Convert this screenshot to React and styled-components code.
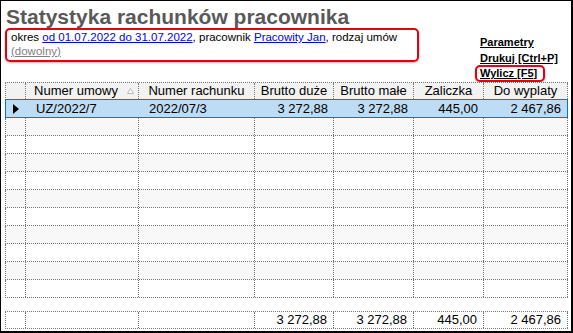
import React from "react";
import styled, { createGlobalStyle } from "styled-components";

const Global = createGlobalStyle`
  html, body { margin: 0; padding: 0; background: #fff; }
  * { box-sizing: border-box; }
`;

const Frame = styled.div`
  width: 573px;
  height: 333px;
  border-style: solid;
  border-color: #000;
  border-width: 1px 2px 2px 1px;
  background: #fff;
  font-family: "Liberation Sans", Arial, sans-serif;
  color: #000;
  overflow: hidden;
`;

const Header = styled.div`
  display: grid;
  grid-template-columns: 470px 1fr;
  height: 81px;
  padding-left: 4px;
`;

const LeftCol = styled.div`
  display: flex;
  flex-direction: column;
  align-items: flex-start;
`;

const Title = styled.h1`
  margin: 5px 0 0 1px;
  font-size: 21px;
  line-height: 22px;
  font-weight: bold;
  color: #595959;
  white-space: nowrap;
`;

const Annotated = styled.div`
  border: 2px solid #e3000f;
  border-radius: 5px;
  box-shadow: 0 1px 2px rgba(200, 0, 0, 0.35);
`;

const Filters = styled(Annotated)`
  width: 414px;
  padding: 0 4px 2px 4px;
  font-size: 11.5px;
  line-height: 14px;
`;

const Link = styled.a`
  color: ${(p) => (p.$muted ? "#808080" : "#0000ff")};
  text-decoration: underline;
  cursor: pointer;
`;

const Actions = styled.div`
  display: flex;
  flex-direction: column;
  align-items: flex-start;
  padding-top: 33px;
`;

const Action = styled.a`
  font-size: 11px;
  line-height: 16px;
  font-weight: bold;
  color: #000;
  text-decoration: underline;
  padding-left: 5px;
  white-space: nowrap;
  cursor: pointer;
`;

const ActionBox = styled(Annotated)`
  margin-top: -1px;
  padding: 0 6px 0 3px;
  ${Action} { padding-left: 0; line-height: 13px; display: block; }
`;

const COLS = "20px 113px 116px 79px 80px 70px 84px";
const COLS_SEL = "20px 113px 116px 79px 80px 70px 83px";

const Grid = styled.div`
  display: flex;
  flex-direction: column;
  margin-left: 4px;
  width: 563px;
  font-size: 13px;
`;

const Row = styled.div`
  display: grid;
  grid-template-columns: ${COLS};
  height: 18px;
  border-left: 1px dotted #777;
  border-bottom: 1px dotted #777;
  background: ${(p) => (p.$shade ? "#f8f8f8" : "#fff")};
  line-height: 17px;
`;

const HeadRow = styled(Row)`
  border-top: 1px dotted #777;
  background: #f2f2f2;
  line-height: 16px;
`;

const SelectedRow = styled.div`
  display: grid;
  grid-template-columns: ${COLS_SEL};
  height: 19px;
  margin-top: -1px;
  border: 1px solid #0078d7;
  background: #bedcf4;
  line-height: 17px;
`;

const FootRow = styled(Row)`
  margin-top: 13px;
  border-top: 1px dotted #777;
  line-height: 16px;
`;

const Cell = styled.div`
  border-right: ${(p) => (p.$plain ? "none" : "1px dotted #777")};
  padding: ${(p) => (p.$num ? "0 6px 0 0" : "0 0 0 10px")};
  text-align: ${(p) => (p.$num ? "right" : "left")};
  white-space: nowrap;
  overflow: hidden;
`;

const IndicatorCell = styled(Cell)`
  padding: 0;
  display: flex;
  align-items: center;
  justify-content: center;
`;

const HeadCell = styled.div`
  border-right: 1px dotted #777;
  display: flex;
  align-items: center;
  white-space: nowrap;
  overflow: hidden;
`;

const HeadLabel = styled.span`
  flex: 1;
  text-align: center;
`;

const SortMark = styled.span`
  width: 12px;
  display: flex;
  align-items: center;
  padding-left: 1px;
`;

const columns = ["Numer umowy", "Numer rachunku", "Brutto duże", "Brutto małe", "Zaliczka", "Do wyplaty"];

const emptyRows = Array.from({ length: 10 }, (_, i) => i);

export default function App() {
  return (
    <>
      <Global />
      <Frame>
        <Header>
          <LeftCol>
            <Title>Statystyka rachunków pracownika</Title>
            <Filters>
              okres <Link>od 01.07.2022 do 31.07.2022</Link>, pracownik <Link>Pracowity Jan</Link>, rodzaj umów{" "}
              <Link $muted>(dowolny)</Link>
            </Filters>
          </LeftCol>
          <Actions>
            <Action>Parametry</Action>
            <Action>Drukuj [Ctrl+P]</Action>
            <ActionBox>
              <Action>Wylicz [F5]</Action>
            </ActionBox>
          </Actions>
        </Header>
        <Grid>
          <HeadRow>
            <HeadCell />
            {columns.map((c, i) => (
              <HeadCell key={c}>
                <HeadLabel>{c}</HeadLabel>
                {i === 0 && (
                  <SortMark>
                    <svg width="7" height="6" viewBox="0 0 7 6">
                      <polygon points="3.5,0.5 6.5,5.5 0.5,5.5" fill="#fff" stroke="#b8b8b8" strokeWidth="1" />
                    </svg>
                  </SortMark>
                )}
              </HeadCell>
            ))}
          </HeadRow>
          <SelectedRow>
            <IndicatorCell $plain>
              <svg width="6" height="10" viewBox="0 0 6 10">
                <polygon points="0,0 6,5 0,10" fill="#000" />
              </svg>
            </IndicatorCell>
            <Cell $plain>UZ/2022/7</Cell>
            <Cell $plain>2022/07/3</Cell>
            <Cell $plain $num>3 272,88</Cell>
            <Cell $plain $num>3 272,88</Cell>
            <Cell $plain $num>445,00</Cell>
            <Cell $plain $num>2 467,86</Cell>
          </SelectedRow>
          {emptyRows.map((i) => (
            <Row key={i} $shade={i % 2 === 0}>
              <Cell />
              <Cell />
              <Cell />
              <Cell />
              <Cell />
              <Cell />
              <Cell />
            </Row>
          ))}
          <FootRow>
            <Cell />
            <Cell />
            <Cell />
            <Cell $num>3 272,88</Cell>
            <Cell $num>3 272,88</Cell>
            <Cell $num>445,00</Cell>
            <Cell $num>2 467,86</Cell>
          </FootRow>
        </Grid>
      </Frame>
    </>
  );
}
